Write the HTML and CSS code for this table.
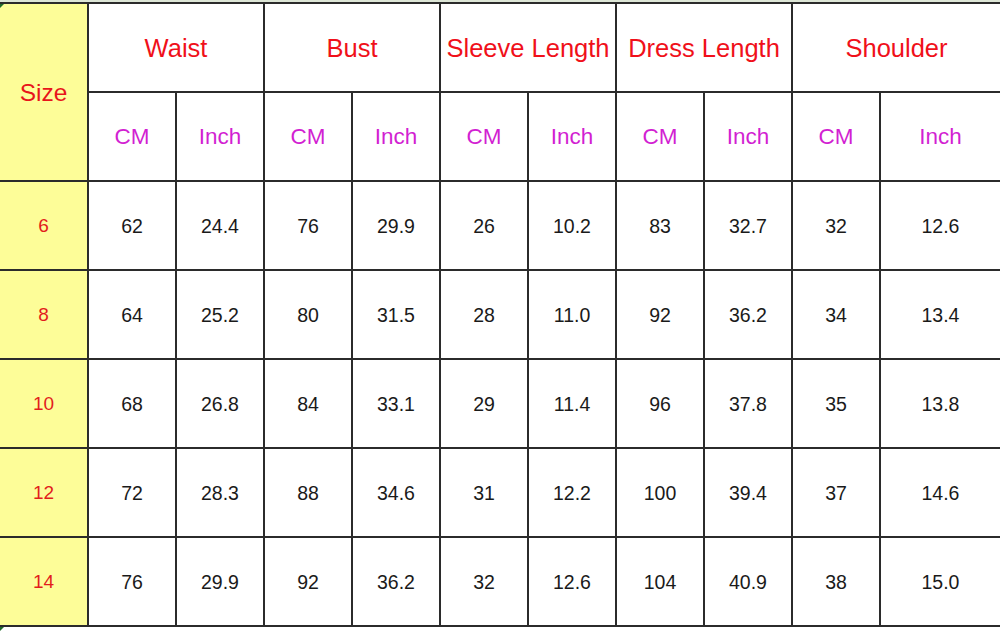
FILE: index.html
```html
<!DOCTYPE html>
<html>
<head>
<meta charset="utf-8">
<link rel="stylesheet" href="styles.css">
</head>
<body>
<div class="page">
  <div class="topstrip"></div>
  <div class="sheet">
    <div class="cell size-head">Size</div>
    <div class="cell head span2">Waist</div>
    <div class="cell head span2">Bust</div>
    <div class="cell head span2">Sleeve Length</div>
    <div class="cell head span2">Dress Length</div>
    <div class="cell head span2">Shoulder</div>

    <div class="cell unit">CM</div><div class="cell unit">Inch</div>
    <div class="cell unit">CM</div><div class="cell unit">Inch</div>
    <div class="cell unit">CM</div><div class="cell unit">Inch</div>
    <div class="cell unit">CM</div><div class="cell unit">Inch</div>
    <div class="cell unit">CM</div><div class="cell unit">Inch</div>

    <div class="cell size">6</div>
    <div class="cell num">62</div><div class="cell num">24.4</div>
    <div class="cell num">76</div><div class="cell num">29.9</div>
    <div class="cell num">26</div><div class="cell num">10.2</div>
    <div class="cell num">83</div><div class="cell num">32.7</div>
    <div class="cell num">32</div><div class="cell num">12.6</div>

    <div class="cell size">8</div>
    <div class="cell num">64</div><div class="cell num">25.2</div>
    <div class="cell num">80</div><div class="cell num">31.5</div>
    <div class="cell num">28</div><div class="cell num">11.0</div>
    <div class="cell num">92</div><div class="cell num">36.2</div>
    <div class="cell num">34</div><div class="cell num">13.4</div>

    <div class="cell size">10</div>
    <div class="cell num">68</div><div class="cell num">26.8</div>
    <div class="cell num">84</div><div class="cell num">33.1</div>
    <div class="cell num">29</div><div class="cell num">11.4</div>
    <div class="cell num">96</div><div class="cell num">37.8</div>
    <div class="cell num">35</div><div class="cell num">13.8</div>

    <div class="cell size">12</div>
    <div class="cell num">72</div><div class="cell num">28.3</div>
    <div class="cell num">88</div><div class="cell num">34.6</div>
    <div class="cell num">31</div><div class="cell num">12.2</div>
    <div class="cell num">100</div><div class="cell num">39.4</div>
    <div class="cell num">37</div><div class="cell num">14.6</div>

    <div class="cell size">14</div>
    <div class="cell num">76</div><div class="cell num">29.9</div>
    <div class="cell num">92</div><div class="cell num">36.2</div>
    <div class="cell num">32</div><div class="cell num">12.6</div>
    <div class="cell num">104</div><div class="cell num">40.9</div>
    <div class="cell num">38</div><div class="cell num">15.0</div>
  </div>
</div>
</body>
</html>
```
FILE: styles.css
```css
html, body {
  margin: 0;
  padding: 0;
  background: #ffffff;
  overflow: hidden;
}
.page {
  width: 1000px;
  height: 642px;
  overflow: hidden;
  position: relative;
  font-family: "Liberation Sans", Arial, sans-serif;
}
.topstrip {
  height: 2px;
  background: #dde6d6;
}
.sheet {
  position: relative;
  width: 1002px;
  display: grid;
  grid-template-columns: 87px repeat(9, 86px) 119px;
  grid-template-rows: repeat(7, 87px);
  gap: 2px;
  padding: 2px 2px 2px 0;
  background: #2b2b2b;
}
.sheet::before,
.sheet::after {
  content: "";
  position: absolute;
  left: 0;
  width: 0;
  height: 0;
  border-top: 4px solid #1f6b2a;
  border-right: 4px solid transparent;
}
.sheet::before { top: 2px; }
.sheet::after { bottom: -4px; }
.cell {
  background: #ffffff;
  display: flex;
  align-items: center;
  justify-content: center;
  white-space: nowrap;
}
.size-head {
  grid-row: span 2;
  background: #fdfd98;
  color: #e8151b;
  font-size: 24.5px;
  padding-top: 2px;
}
.span2 {
  grid-column: span 2;
}
.head {
  color: #f0101a;
  font-size: 25.5px;
  padding-top: 1px;
}
.unit {
  color: #d21fd2;
  font-size: 22.5px;
  padding-top: 1px;
}
.size {
  background: #fdfd98;
  color: #e21d1d;
  font-size: 19px;
  padding-top: 1px;
}
.num {
  color: #1a1a1a;
  font-size: 19.5px;
  padding-top: 1px;
}
```
